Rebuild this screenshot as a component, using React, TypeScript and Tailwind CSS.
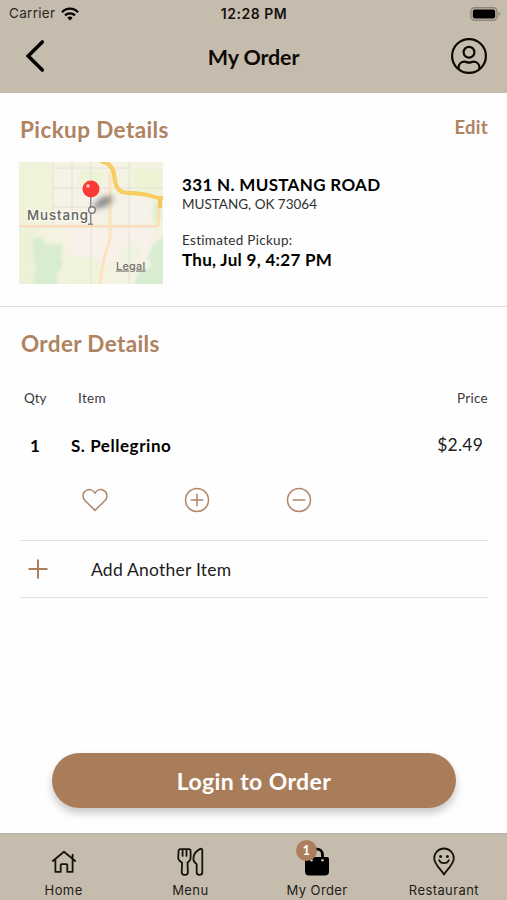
import type { ReactNode } from "react";

function StatusBar() {
  return (
    <div className="grid h-[27px] grid-cols-3 items-center pl-[9px] pr-[6px] font-['Inter',sans-serif] text-[13.5px] leading-[27px] text-[#15120d]">
      <div className="flex items-center gap-[6px]">
        <span className="tracking-[0.3px] text-[#2d2922]">Carrier</span>
        <svg width="18" height="14" viewBox="0 0 18 14" fill="none" stroke="#000" strokeWidth="2.3">
          <path d="M1 5.2C5.4.5 12.6.5 17 5.2" />
          <path d="M4 8.4c2.8-2.8 7.2-2.8 10 0" />
          <path d="M6.3 10.7 9 13.6l2.7-2.9c-1.6-1.5-3.8-1.5-5.4 0Z" fill="#000" stroke="none" />
        </svg>
      </div>
      <span className="-ml-[2px] text-center text-[14px] font-semibold tracking-[0.5px]">12:28 PM</span>
      <svg className="justify-self-end" width="31" height="14" viewBox="0 0 31 14">
        <rect x="1" y="0.8" width="26" height="12.4" rx="3.6" fill="none" stroke="#8d867b" strokeWidth="1.4" />
        <rect x="2.8" y="2.6" width="22.4" height="8.8" rx="1.8" fill="#000" />
        <path d="M28.6 4.8c2 .8 2 3.6 0 4.4Z" fill="#8d867b" />
      </svg>
    </div>
  );
}

function Header() {
  return (
    <header className="h-[92.5px] shrink-0 bg-[#c6bcae]">
      <StatusBar />
      <div className="grid h-[58px] grid-cols-3 items-center pl-[25px] pr-[19px]">
        <svg width="20" height="34" viewBox="0 0 20 34" fill="none" stroke="#000" strokeWidth="3.6" strokeLinecap="round" strokeLinejoin="miter">
          <path d="M17.3 3 3.2 17 17.3 31" />
        </svg>
        <h1 className="-ml-[6px] whitespace-nowrap pt-px text-center text-[21.5px] font-bold leading-[30px] tracking-[-0.15px] text-[#0e0b07]">My Order</h1>
        <svg className="justify-self-end" width="38" height="38" viewBox="0 0 38 38" fill="none" stroke="#0c0903" strokeWidth="2.2">
          <circle cx="19" cy="19" r="16.9" />
          <circle cx="19" cy="15.2" r="5.4" />
          <path d="M8.6 32v-1.500c0-3.700 2.700-5.800 6-5.800 1.700 0 2.500.9 4.400.9s2.700-.9 4.400-.9c3.300 0 6 2.100 6 5.800V32" />
        </svg>
      </div>
    </header>
  );
}

function PickupMap() {
  return (
    <svg width="144" height="122" viewBox="0 0 144 122" className="shrink-0">
      <defs>
        <filter id="soft"><feGaussianBlur stdDeviation="1.6" /></filter>
        <filter id="pinShade" x="-50%" y="-80%" width="200%" height="260%"><feGaussianBlur stdDeviation="3" /></filter>
        <clipPath id="tile"><rect width="144" height="122" /></clipPath>
      </defs>
      <g clipPath="url(#tile)">
        <rect width="144" height="122" fill="#f4f2e0" />
        <g filter="url(#soft)">
          <path d="M-6-6h40v68H-6Z" fill="#f0f3d9" />
          <path d="M34 4h52v58H34Z" fill="#f6f2e8" />
          <path d="M60 8h24v16H60ZM112 8h32v22h-26Z" fill="#edf3d4" />
          <path d="M96 36h34v28H94Z" fill="#f7f2e9" />
          <path d="M50 66h85v30l-20 4-12-10-12 12-26-4-15-6Z" fill="#f7f1e9" />
          <path d="M-6 66h24l-4 14 4 20-6 28H-6Z" fill="#edf2d6" />
          <path d="M14 76l8-2 4 8 18 1-2 12 2 8-6 10 2 14H12l5-22-3-16Z" fill="#d8ecd0" />
          <path d="M48 96l30-2 4 34H46Z" fill="#eef3da" />
          <path d="M150 70l-12 10-4 2-6 14 6 8-14 6-6 18h38Z" fill="#d8ecd0" />
          <path d="M102 86l14-6 6 10-8 14-14-4Z" fill="#eff3df" />
          <path d="M134 42l8-4v20l-8 2Z" fill="#ddeed2" />
        </g>
        <g stroke="#dfddd5" strokeWidth="0.8" fill="none">
          <path d="M34 0v64M53 0v64M72 0v122M110 0v122M34 6h76M34 26h110M34 45h60" />
        </g>
        <path d="M0 64.300h139" stroke="#f9dcbd" strokeWidth="2.600" fill="none" />
        <path d="M91 10v54c1 12-1 16-4 26-4 12-4 20-6 32" stroke="#fbe2c0" strokeWidth="3" fill="none" />
        <path d="M141 40c-2 8-1 14-2 24" stroke="#f9deb2" strokeWidth="3" fill="none" />
        <path d="M82-1c8 2 12 6 13 13 1 9 2 17 11 18.500 9 1.200 18 .5 26 3.500 4 1.500 7 2 12 2M141 36v10" stroke="#f4c75f" strokeWidth="4" fill="none" />
        <path d="M82-1c8 2 12 6 13 13 1 9 2 17 11 18.500 9 1.200 18 .5 26 3.500 4 1.500 7 2 12 2" stroke="#fbcf5f" strokeWidth="2.400" fill="none" />
        <path d="M73 47C77 39 85 33 94 35c0 7-10 10-21 12Z" fill="#77777c" filter="url(#pinShade)" />
        <text x="8" y="58" fontSize="13.300" letterSpacing="0.9" fontWeight="500" fill="#646463" stroke="#fbfaf0" strokeWidth="2" paintOrder="stroke" className="font-['Inter',sans-serif]">Mustang</text>
        <path d="M71.700 34v28M69 62.300h5" stroke="#8a8a8c" strokeWidth="1.400" />
        <circle cx="73" cy="48" r="3.300" fill="#f4f1ea" stroke="#77777a" strokeWidth="1.400" />
        <circle cx="72" cy="27" r="8.500" fill="#f93a35" />
        <circle cx="69" cy="24" r="1.800" fill="#ffc9c5" />
        <text x="97" y="107.500" fontSize="10.800" letterSpacing="0.300" fontWeight="500" fill="#6d706a" textDecoration="underline" className="font-['Inter',sans-serif]">Legal</text>
      </g>
    </svg>
  );
}

function PickupDetails() {
  return (
    <section className="h-[214.500px] shrink-0 border-b-[1.500px] border-[#dcdcdc] pl-[19px] pr-[19px] pt-[21px]">
      <div className="flex h-[32px] items-center justify-between text-[#af8260]">
        <h2 className="pl-px text-[22.500px] font-bold tracking-[0.4px]">Pickup Details</h2>
        <button className="pb-[4px] text-[18.500px] font-bold tracking-[0.3px]">Edit</button>
      </div>
      <div className="flex gap-[19px] pt-[16px]">
        <PickupMap />
        <div className="flex flex-col whitespace-nowrap pt-[12.500px] text-black">
          <span className="text-[17px] font-bold leading-[21px] tracking-[0.33px]">331 N. MUSTANG ROAD</span>
          <span className="text-[13.500px] leading-[18px] text-[#303030]">MUSTANG, OK 73064</span>
          <span className="mt-[18px] text-[13.500px] leading-[18px] tracking-[0.3px] text-[#303030]">Estimated Pickup:</span>
          <span className="text-[17px] font-bold leading-[21px] tracking-[0.3px]">Thu, Jul 9, 4:27 PM</span>
        </div>
      </div>
    </section>
  );
}

function ItemActions() {
  return (
    <div className="flex items-center gap-[76px] pl-[62px] pt-[30px]">
      <svg width="26" height="26" viewBox="0 0 26 26" fill="none" stroke="#b28569" strokeWidth="1.500" strokeLinejoin="round">
        <path d="M13 23.400 3.200 13.700C-.4 10 .9 5 4.600 3.200 7.700 1.700 11.200 2.800 13 6.200 14.800 2.800 18.300 1.700 21.400 3.200c3.700 1.800 5 6.800 1.400 10.500Z" />
      </svg>
      <svg width="26" height="26" viewBox="0 0 26 26" fill="none" stroke="#b28569" strokeWidth="1.500" strokeLinecap="round">
        <circle cx="13" cy="13" r="11.500" />
        <path d="M13 7.200v11.600M7.200 13h11.600" />
      </svg>
      <svg width="26" height="26" viewBox="0 0 26 26" fill="none" stroke="#b28569" strokeWidth="1.500" strokeLinecap="round">
        <circle cx="13" cy="13" r="11.500" />
        <path d="M7.200 13h11.600" />
      </svg>
    </div>
  );
}

function OrderDetails() {
  return (
    <section className="flex-1 pl-[20px] pr-[19px] pt-[21px]">
      <h2 className="pl-px text-[22.500px] font-bold leading-[32px] tracking-[0.35px] text-[#af8260]">Order Details</h2>
      <div className="mt-[29px] flex h-[18px] items-center pl-[4px] text-[13.500px] text-[#3b3b3b]">
        <span className="w-[54px]">Qty</span>
        <span className="tracking-[0.3px]">Item</span>
        <span className="ml-auto tracking-[0.3px]">Price</span>
      </div>
      <div className="mt-[26px] flex h-[24px] items-center pl-[10px] pr-[5px] pt-px text-[17px] text-black">
        <span className="w-[41px] font-bold">1</span>
        <span className="font-bold tracking-[0.55px]">S. Pellegrino</span>
        <span className="ml-auto text-[17.500px] tracking-[0.2px] text-[#1c1c1c]">$2.49</span>
      </div>
      <ItemActions />
      <button className="mt-[27px] flex h-[58px] w-full items-center border-y border-[#e2e2e2] pl-[8px] text-[17.500px] text-[#1c1c1c]">
        <svg width="20" height="20" viewBox="0 0 20 20" fill="none" stroke="#ad7f5c" strokeWidth="2">
          <path d="M10 .5v19M.5 10h19" />
        </svg>
        <span className="ml-[43px] pt-[2px] tracking-[0.22px]">Add Another Item</span>
      </button>
    </section>
  );
}

function Tab({ label, children }: { label: string; children: ReactNode }) {
  return (
    <a className="flex flex-col items-center pt-[11px]">
      <span className="relative flex h-[33px] w-[32px] items-center justify-center">{children}</span>
      <span className="ml-[0.500px] whitespace-nowrap pt-[2px] font-['Inter',sans-serif] text-[13px] leading-[20px] tracking-[0.4px] text-[#211d16]">{label}</span>
    </a>
  );
}

function TabBar() {
  return (
    <nav className="grid h-[67px] shrink-0 grid-cols-4 border-t border-[#b9b1a6] bg-[#c6bcae]">
      <Tab label="Home">
        <svg className="ml-px" width="26" height="26" viewBox="0 0 26 26" fill="none" stroke="#17130b" strokeWidth="1.800" strokeLinecap="round" strokeLinejoin="round">
          <path d="M1.800 12 13 2.700l11.200 9.300M4.400 10.300v12.600h5.300v-6.800q0-1 1-1h4.600q1 0 1 1v6.800h5.300V10.300M21.600 5.700v4" />
        </svg>
      </Tab>
      <Tab label="Menu">
        <svg width="28" height="30" viewBox="0 0 28 30" fill="none" stroke="#17130b" strokeWidth="1.800" strokeLinecap="round" strokeLinejoin="round">
          <path d="M4.200 2.100h8.800c1.300 0 1.600 1 1.600 2.200v6.300c0 2.200-1 3.800-3.100 4.900l.4 9.500c.2 3.900-6.400 3.900-6.200 0l.4-9.500C3.500 14.400 2.200 12.800 2.200 10.600L2.600 4c.1-1.200.5-1.900 1.600-1.900ZM6.600 2.400v6.500M10.500 2.400v6.500" />
          <path d="M26.300 25.500V3c0-1.300-1.200-1.500-2.500-.9-4 2-6.400 6.200-6.400 10 0 2.200 1.100 3.700 3.300 5.100v8.300c0 3.100 5.600 3.100 5.600 0Z" />
        </svg>
      </Tab>
      <Tab label="My Order">
        <svg width="26" height="30" viewBox="0 0 26 30">
          <path d="M7.500 11.500V7.800C7.500.3 18.500.3 18.500 7.800v3.700" fill="none" stroke="#000" strokeWidth="2.800" />
          <path d="M3 10h20q2 0 2 2v12.500q0 4-4 4H5q-4 0-4-4V12q0-2 2-2Z" fill="#000" />
          <circle cx="7.500" cy="13.300" r="1.300" fill="#c6bcae" />
          <circle cx="18.500" cy="13.300" r="1.300" fill="#c6bcae" />
        </svg>
        <span className="absolute -left-[5px] -top-[5px] flex h-[21px] w-[21px] items-center justify-center rounded-full bg-[#ad7e5b] font-['Lato',sans-serif] text-[13px] font-bold text-white">1</span>
      </Tab>
      <Tab label="Restaurant">
        <svg width="24" height="30" viewBox="0 0 24 30" fill="none" stroke="#17130b" strokeWidth="1.800" strokeLinecap="round" strokeLinejoin="round">
          <path d="M12 27.500C9.500 23 2.200 17.500 2.200 11.300a9.800 9.800 0 0 1 19.600 0C21.800 17.500 14.500 23 12 27.500Z" />
          <path d="M7.200 13.200c1.500 4 8.100 4 9.600 0" />
          <circle cx="8.600" cy="9.500" r="0.600" fill="#17130b" />
          <circle cx="15.400" cy="9.500" r="0.600" fill="#17130b" />
        </svg>
      </Tab>
    </nav>
  );
}

export default function App() {
  return (
    <div className="flex h-[900px] w-[507px] flex-col overflow-hidden bg-[#fefefe] font-['Lato',sans-serif]">
      <Header />
      <PickupDetails />
      <OrderDetails />
      <div className="shrink-0 pb-[25px] pl-[52px] pr-[51px]">
        <button className="h-[55px] w-full rounded-full bg-[#aa7d5a] pt-[2px] text-[23px] font-bold tracking-[0.4px] text-white shadow-[0_5px_9px_rgba(0,0,0,0.22)]">Login to Order</button>
      </div>
      <TabBar />
    </div>
  );
}
